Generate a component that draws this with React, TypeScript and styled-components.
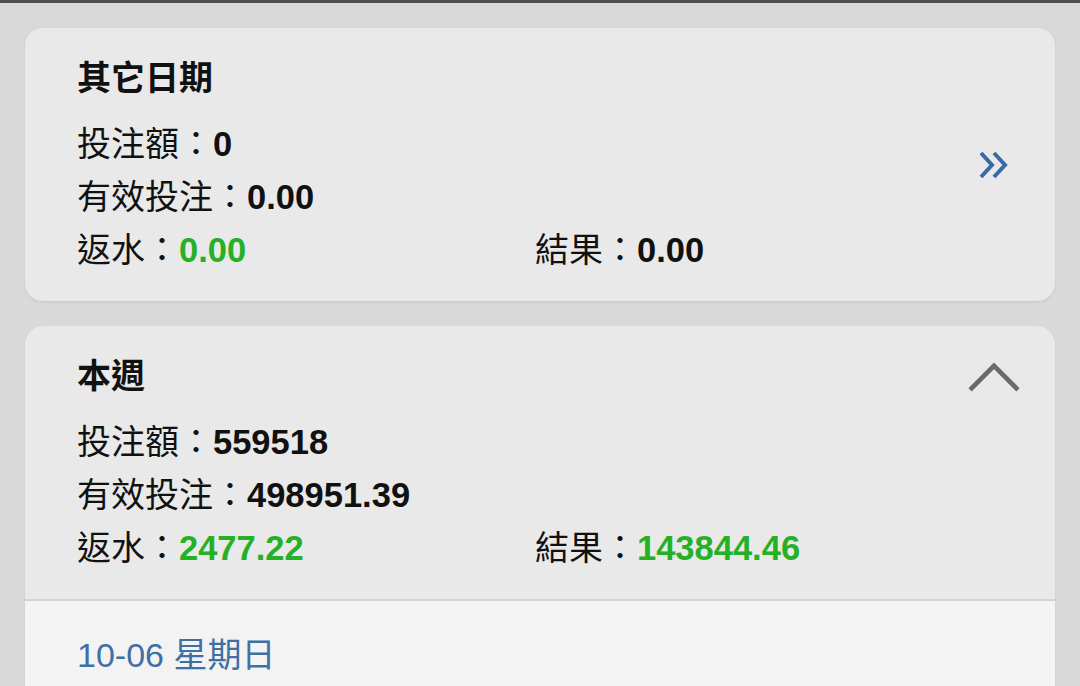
import React from "react"
import styled, { createGlobalStyle } from "styled-components"

const GlobalStyle = createGlobalStyle`
  html, body {
    margin: 0;
    padding: 0;
    background: #d9d9d9;
  }
  body {
    font-family: "Liberation Sans", "Noto Sans CJK TC", sans-serif;
    color: #111;
  }
`;

const Page = styled.div`
    min-height: 686px;
    border-top: 3px solid #4f4f4f;
    padding: 25px 25px 0;
    display: flex;
    flex-direction: column;
    gap: 25px;
    box-sizing: border-box;
`;

const Card = styled.div`
    background: #e9e9e9;
    border-radius: 18px;
    box-shadow: 0 1px 3px rgba(0, 0, 0, 0.08);
    overflow: hidden;
`;

const Summary = styled.div<{$centerIcon: boolean}>`
    display: flex;
    align-items: ${(props) => props.$centerIcon ? 'center' : 'flex-start'};
    padding: 24px 35px 24px 52px;
`;

const Body = styled.div`
    flex: 1;
`;

const Title = styled.div`
    font-size: 34px;
    line-height: 53px;
    font-weight: 700;
    margin-bottom: 13px;
`;

const Grid = styled.div`
    display: grid;
    grid-template-columns: 458px 1fr;
`;

const Row = styled.div`
    font-size: 34px;
    line-height: 53px;
    height: 53px;
    white-space: nowrap;
`;

const Value = styled.span<{$green?: boolean}>`
    font-weight: 700;
    font-size: 34.5px;
    line-height: 1;
    color: ${(props) => props.$green ? '#25b025' : '#111'};
`;

const IconBox = styled.div`
    width: 52px;
    height: 53px;
    display: flex;
    align-items: center;
    justify-content: center;
`;

const DayList = styled.div`
    background: #f3f3f3;
    border-top: 2px solid #d3d3d3;
    min-height: 100px;
`;

const Day = styled.div`
    padding: 28px 52px;
    font-size: 34px;
    line-height: 53px;
    color: #3f6fa3;
`;

type Stats = {
    title: string;
    bet: string;
    valid: string;
    rebate: string;
    result: string;
    resultGreen?: boolean;
}

function DoubleChevron() {
    return (
        <svg width="36" height="30" viewBox="0 0 36 30" fill="none" stroke="#3a6aa3" strokeWidth="4" strokeLinecap="butt" strokeLinejoin="miter">
            <path d="M5 3 L16 15 L5 27" />
            <path d="M18 3 L29 15 L18 27" />
        </svg>
    )
}

function ChevronUp() {
    return (
        <svg width="56" height="32" viewBox="0 0 56 32" fill="none" stroke="#6a6a6a" strokeWidth="5" strokeLinecap="square">
            <path d="M4 28 L28 4 L52 28" />
        </svg>
    )
}

function StatBlock({ s }: { s: Stats }) {
    return (
        <Body>
            <Title>{s.title}</Title>
            <Row>投注額：<Value>{s.bet}</Value></Row>
            <Row>有效投注：<Value>{s.valid}</Value></Row>
            <Grid>
                <Row>返水：<Value $green>{s.rebate}</Value></Row>
                <Row>結果：<Value $green={s.resultGreen}>{s.result}</Value></Row>
            </Grid>
        </Body>
    )
}

const other: Stats = { title: "其它日期", bet: "0", valid: "0.00", rebate: "0.00", result: "0.00" };
const week: Stats = { title: "本週", bet: "559518", valid: "498951.39", rebate: "2477.22", result: "143844.46", resultGreen: true };

export default function App() {
    return (
        <>
            <GlobalStyle />
            <Page>
                <Card>
                    <Summary $centerIcon={true}>
                        <StatBlock s={other} />
                        <IconBox><DoubleChevron /></IconBox>
                    </Summary>
                </Card>
                <Card>
                    <Summary $centerIcon={false}>
                        <StatBlock s={week} />
                        <IconBox><ChevronUp /></IconBox>
                    </Summary>
                    <DayList>
                        <Day>10-06 星期日</Day>
                    </DayList>
                </Card>
            </Page>
        </>
    )
}
